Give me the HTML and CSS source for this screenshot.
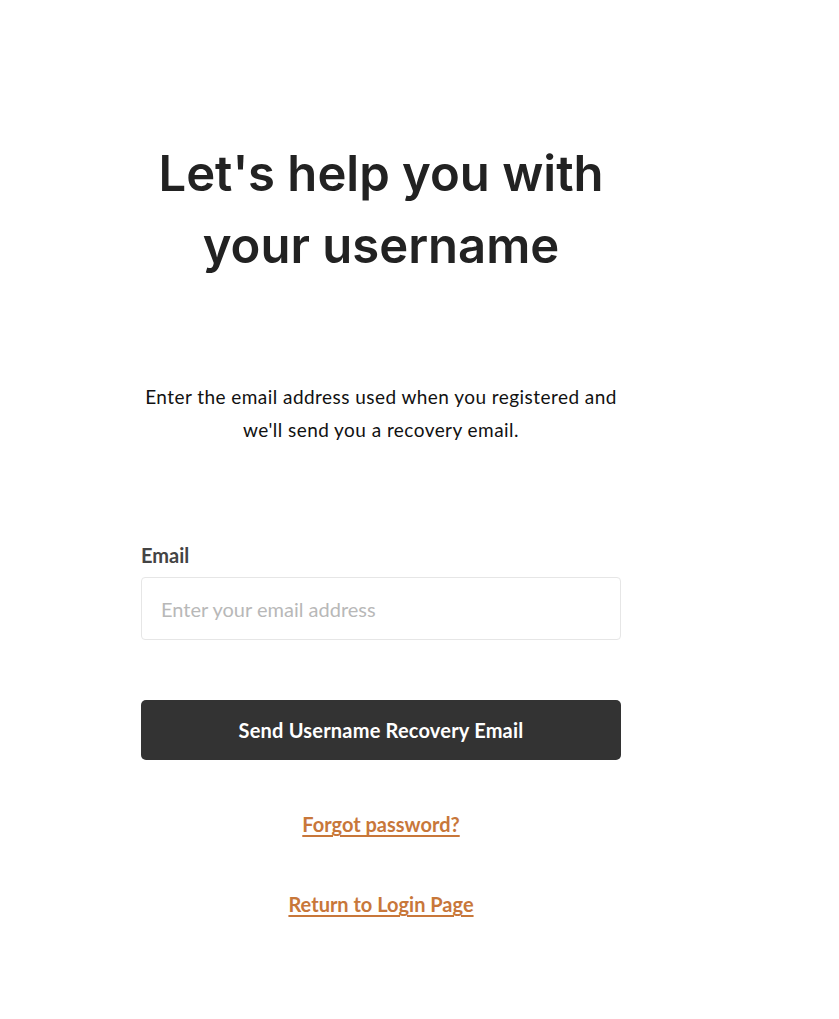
FILE: index.html
```html
<!DOCTYPE html>
<html lang="en">
<head>
  <meta charset="UTF-8" />
  <meta name="viewport" content="width=device-width, initial-scale=1" />
  <title>Username Recovery</title>
  <link rel="stylesheet" href="styles.css">
</head>
<body>
  <main class="recovery">
    <h1 class="recovery-title">Let's help you with your username</h1>
    <p class="recovery-intro">Enter the email address used when you registered and we'll send you a recovery email.</p>

    <form class="recovery-form" onsubmit="return false;">
      <label class="field-label" for="email">Email</label>
      <input id="email" class="field-input" type="email" placeholder="Enter your email address" />
      <button type="submit" class="submit-btn">Send Username Recovery Email</button>
    </form>

    <div class="links">
      <a href="#" class="link">Forgot password?</a>
      <a href="#" class="link">Return to Login Page</a>
    </div>
  </main>
</body>
</html>
```

FILE: styles.css
```css
* {
  box-sizing: border-box;
}
body {
  margin: 0;
  background: #fff;
  font-family: Lato, 'Liberation Sans', sans-serif;
  color: #222;
}
.recovery {
  width: 480px;
  margin-left: 141px;
  padding-top: 138px;
  display: flex;
  flex-direction: column;
}
.recovery-title {
  margin: 0;
  padding: 0 10px;
  font-family: Inter, 'Liberation Sans', sans-serif;
  font-size: 49px;
  font-weight: 600;
  line-height: 72px;
  text-align: center;
  color: #222;
}
.recovery-intro {
  margin: 98px 0 0;
  font-size: 19px;
  letter-spacing: 0.45px;
  line-height: 33px;
  text-align: center;
  color: #111;
}
.recovery-form {
  display: flex;
  flex-direction: column;
  margin-top: 97px;
}
.field-label {
  font-size: 20px;
  font-weight: 700;
  color: #444;
  line-height: 24px;
  margin-bottom: 10px;
}
.field-input {
  height: 63px;
  padding: 0 19px;
  border: 1px solid #e6e6e6;
  border-radius: 4px;
  font-family: inherit;
  font-size: 20px;
  color: #222;
  outline: none;
}
.field-input::placeholder {
  color: #b8b8b8;
}
.submit-btn {
  margin-top: 60px;
  height: 60px;
  border: none;
  border-radius: 5px;
  background: #333;
  color: #fff;
  font-family: inherit;
  font-size: 20px;
  letter-spacing: 0.2px;
  font-weight: 700;
  cursor: pointer;
}
.links {
  display: flex;
  flex-direction: column;
  align-items: center;
  gap: 55px;
  margin-top: 52px;
}
.link {
  font-size: 20px;
  font-weight: 700;
  line-height: 25px;
  color: #c8773a;
  text-decoration: underline;
  text-underline-offset: 3px;
}
```
